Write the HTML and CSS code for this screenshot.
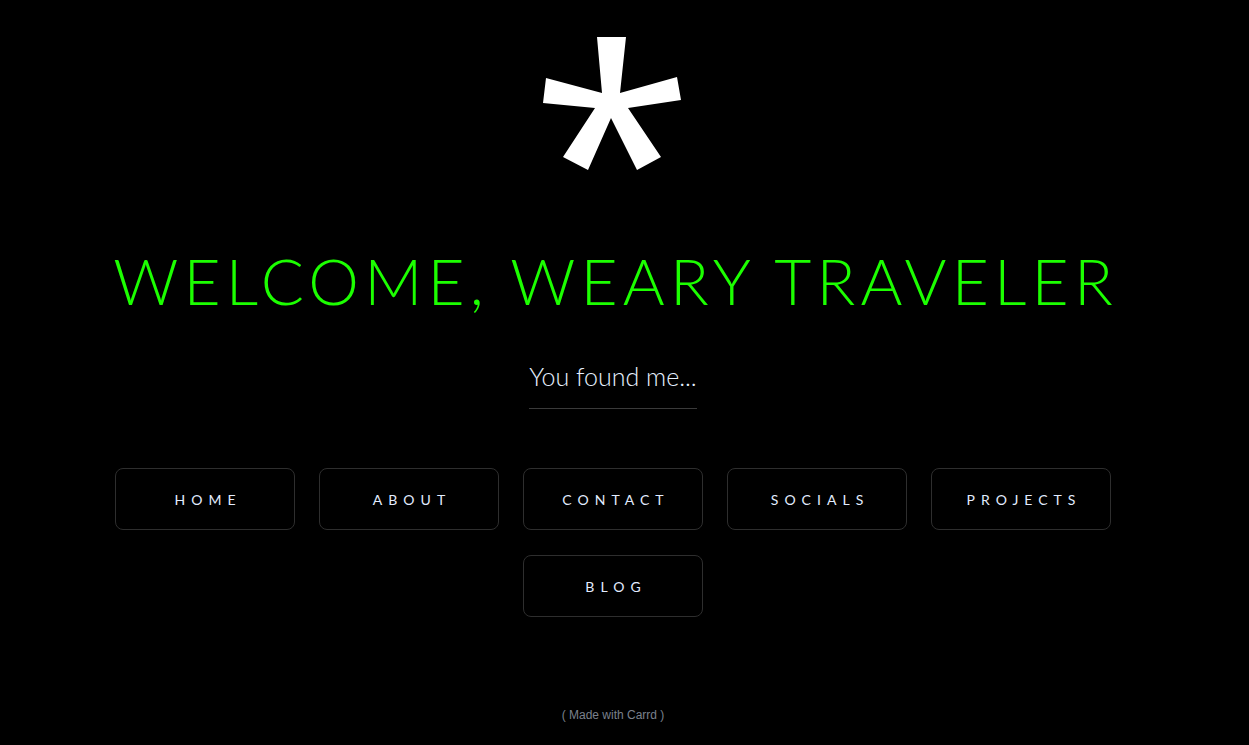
FILE: index.html
```html
<!DOCTYPE html>
<html>
<head>
<meta charset="utf-8">
<link rel="stylesheet" href="styles.css">
</head>
<body>
<main class="page">
  <div class="logo">
    <svg width="150" height="150" viewBox="540 30 150 150">
      <polygon fill="#fff" points="599,37 628,37 622,93 679,77 683,100 630,108 663,157 639,170 613,118 590,170 565,157 597,108 545,103 548,78 604,93"/>
    </svg>
  </div>
  <h1 class="title">WELCOME, WEARY TRAVELER</h1>
  <p class="subtitle">You found me...</p>
  <hr class="divider">
  <nav class="buttons">
    <a class="btn" href="#">HOME</a>
    <a class="btn" href="#">ABOUT</a>
    <a class="btn" href="#">CONTACT</a>
    <a class="btn" href="#">SOCIALS</a>
    <a class="btn" href="#">PROJECTS</a>
    <a class="btn" href="#">BLOG</a>
  </nav>
  <footer class="credit">( Made with Carrd )</footer>
</main>
</body>
</html>
```

FILE: styles.css
```css
html, body {
  margin: 0;
  padding: 0;
  background: #000;
}
body {
  font-family: "Lato", "Noto Sans", sans-serif;
}
.page {
  display: flex;
  flex-direction: column;
  align-items: center;
  width: 1226px;
  height: 745px;
  overflow: hidden;
}
.logo {
  margin-top: 30px;
  height: 150px;
}
.logo svg {
  display: block;
}
.title {
  margin: 61px 0 0 0;
  font-weight: 300;
  font-size: 64px;
  line-height: 80px;
  letter-spacing: 5.2px;
  padding-left: 5.2px;
  color: #1cff00;
  white-space: nowrap;
}
.subtitle {
  margin: 40px 0 0 0;
  font-size: 25px;
  line-height: 30px;
  font-weight: 300;
  color: #e6f0ff;
}
.divider {
  width: 168px;
  margin: 17px 0 0 0;
  border: none;
  border-top: 1px solid #3a3a3a;
  height: 0;
}
.buttons {
  margin-top: 59px;
  width: 996px;
  display: flex;
  flex-wrap: wrap;
  justify-content: center;
  gap: 25px 24px;
}
.btn {
  box-sizing: border-box;
  width: 180px;
  height: 62px;
  border: 1px solid #2e2e2e;
  border-radius: 8px;
  display: flex;
  align-items: center;
  justify-content: center;
  color: #e2ecff;
  text-decoration: none;
  font-size: 14px;
  font-weight: 400;
  letter-spacing: 0.43em;
  padding-left: 0.43em;
}
.credit {
  margin-top: 91px;
  font-family: "Liberation Sans", Arial, sans-serif;
  font-size: 12px;
  color: #7a808c;
}
```
